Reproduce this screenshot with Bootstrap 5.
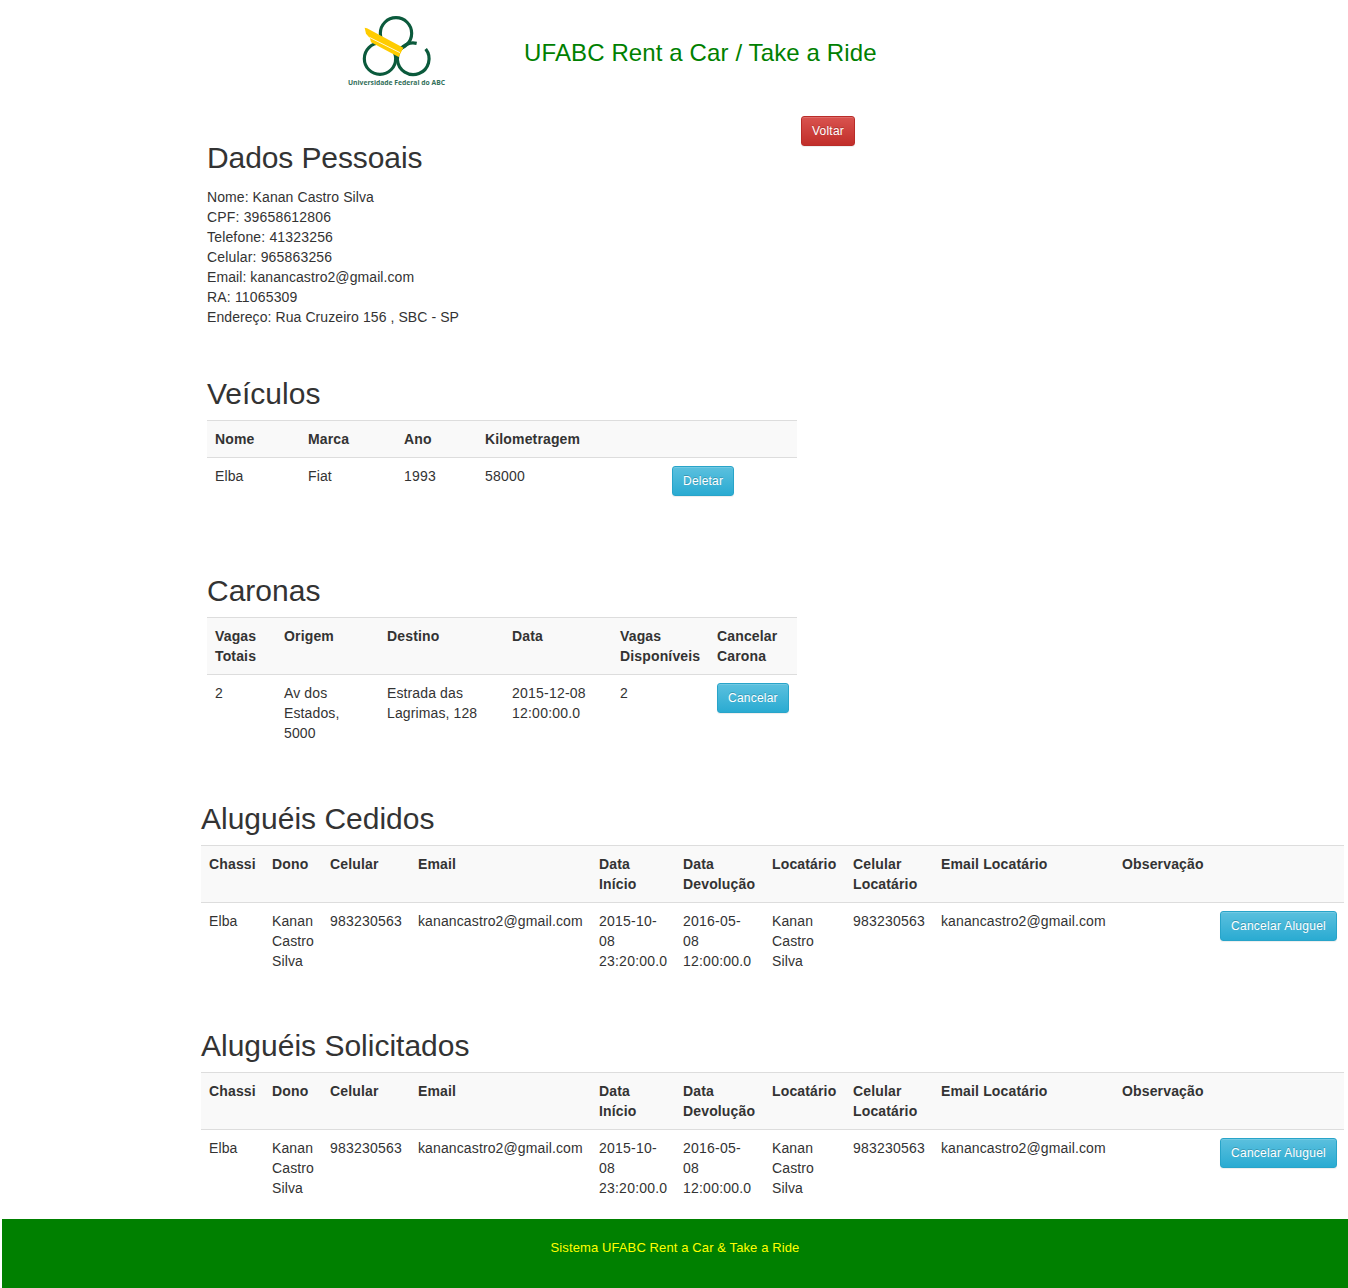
<!DOCTYPE html>
<html lang="pt-BR">
<head>
<meta charset="utf-8">
<meta name="viewport" content="width=device-width, initial-scale=1">
<title>UFABC Rent a Car / Take a Ride</title>
<link href="https://cdn.jsdelivr.net/npm/bootstrap@5.3.0/dist/css/bootstrap.min.css" rel="stylesheet">
<style>
  body { font: 14px/20px "Liberation Sans", Arial, sans-serif; color: #333; background: #fff; letter-spacing: .12px; overflow: hidden; }
  .page-top { height: 116px; padding-left: 340px; }
  .brand-logo { width: 115px; height: 85px; margin-top: 8px; }
  .site-title { font-size: 24px; line-height: 28px; color: green; margin: 39px 0 0 69px; letter-spacing: .12px; }
  .profile { padding-left: 207px; height: 261px; }
  .profile-info { width: 594px; padding-top: 25px; letter-spacing: .08px; }
  h2 { font-size: 30px; line-height: 33px; font-weight: 400; margin: 0 0 10px; letter-spacing: 0; }
  .profile h2 { margin-bottom: 13px; letter-spacing: -.1px; }
  .narrow-block { margin-left: 207px; width: 590px; }
  .wide-block { margin-left: 201px; width: 1143px; height: 227px; }
  .vehicles { height: 197px; }
  .rides { height: 228px; }
  .wide-block.last-block { height: 190px; }
  .grid-table { table-layout: fixed; border-collapse: separate; border-spacing: 0; color: #333; --bs-table-color: #333; --bs-table-bg: transparent; }
  .grid-table > :not(caption) > * > * { padding: 8px; border: 0; border-top: 1px solid #ddd; vertical-align: top; }
  .grid-table > thead > tr > th { background: #f9f9f9; letter-spacing: .15px; }
  .grid-table td.digits { letter-spacing: .22px; }
  .profile-info .digits { letter-spacing: .17px; }
  .btn-glossy { font-size: 12px; line-height: 18px; padding: 5px 10px; border-radius: 3px; color: #fff; letter-spacing: .22px; text-shadow: 0 -1px 0 rgba(0,0,0,.2); box-shadow: inset 0 1px 0 rgba(255,255,255,.15), 0 1px 1px rgba(0,0,0,.075); display: block; white-space: nowrap; }
  .btn-glossy:hover { color: #fff; }
  .wide-block .btn-glossy { letter-spacing: .27px; }
  .btn-sky { background: linear-gradient(#5bc0de, #2aabd2); border-color: #28a4c9; }
  .btn-brick { background: linear-gradient(#d9534f, #c12e2a); border-color: #b92c28; }
  .page-foot { margin-left: 2px; height: 69px; padding-top: 19px; background: green; color: #ff0; font-size: 13px; letter-spacing: .11px; }
</style>
</head>
<body>
<header class="page-top d-flex align-items-start">
  <svg class="brand-logo" viewBox="0 0 345 255" role="img" aria-label="Universidade Federal do ABC">
    <g fill="none" stroke="#0b5a3c" stroke-width="9.5">
      <circle cx="168" cy="76" r="47"/>
      <circle cx="120" cy="152" r="47"/>
      <path d="M230 106A47.5 47.5 0 1 0 257 123" stroke-linejoin="round"/>
    </g>
    <path d="M74 59L81 61L190 119L176 147L93 103L90 91L78 77Z" fill="#fc0"/>
    <path d="M88 88L180 134" stroke="#fff8d8" stroke-width="3"/>
    <text x="24" y="231" textLength="291" lengthAdjust="spacingAndGlyphs" font-family="Open Sans, sans-serif" font-size="20" font-weight="700" fill="#33705a" letter-spacing="0">Universidade Federal do ABC</text>
  </svg>
  <h1 class="site-title fw-normal">UFABC Rent a Car / Take a Ride</h1>
</header>
<main>
  <section class="profile d-flex align-items-start">
    <div class="profile-info">
      <h2>Dados Pessoais</h2>
      <div>Nome: Kanan Castro Silva</div>
      <div class="digits">CPF: 39658612806</div>
      <div class="digits">Telefone: 41323256</div>
      <div class="digits">Celular: 965863256</div>
      <div>Email: kanancastro2@gmail.com</div>
      <div class="digits">RA: 11065309</div>
      <div>Endereço: Rua Cruzeiro 156 , SBC - SP</div>
    </div>
    <button type="button" class="btn btn-glossy btn-brick">Voltar</button>
  </section>

  <section class="narrow-block vehicles">
    <h2>Veículos</h2>
    <table class="table grid-table mb-0">
      <colgroup><col width="93"><col width="96"><col width="81"><col width="187"><col width="133"></colgroup>
      <thead><tr><th>Nome</th><th>Marca</th><th>Ano</th><th>Kilometragem</th><th></th></tr></thead>
      <tbody><tr><td>Elba</td><td>Fiat</td><td class="digits">1993</td><td class="digits">58000</td><td><button type="button" class="btn btn-glossy btn-sky">Deletar</button></td></tr></tbody>
    </table>
  </section>

  <section class="narrow-block rides">
    <h2>Caronas</h2>
    <table class="table grid-table mb-0">
      <colgroup><col width="69"><col width="103"><col width="125"><col width="108"><col width="97"><col width="88"></colgroup>
      <thead><tr><th>Vagas<br>Totais</th><th>Origem</th><th>Destino</th><th>Data</th><th>Vagas<br>Disponíveis</th><th>Cancelar<br>Carona</th></tr></thead>
      <tbody><tr><td>2</td><td>Av dos<br>Estados,<br>5000</td><td>Estrada das<br>Lagrimas, 128</td><td class="digits">2015-12-08<br>12:00:00.0</td><td>2</td><td><button type="button" class="btn btn-glossy btn-sky">Cancelar</button></td></tr></tbody>
    </table>
  </section>

  <section class="wide-block">
    <h2>Aluguéis Cedidos</h2>
    <table class="table grid-table mb-0">
      <colgroup><col width="63"><col width="58"><col width="88"><col width="181"><col width="84"><col width="89"><col width="81"><col width="88"><col width="181"><col width="98"><col width="132"></colgroup>
      <thead><tr><th>Chassi</th><th>Dono</th><th>Celular</th><th>Email</th><th>Data<br>Início</th><th>Data<br>Devolução</th><th>Locatário</th><th>Celular<br>Locatário</th><th>Email Locatário</th><th>Observação</th><th></th></tr></thead>
      <tbody><tr><td>Elba</td><td>Kanan<br>Castro<br>Silva</td><td class="digits">983230563</td><td>kanancastro2@gmail.com</td><td class="digits">2015-10-<br>08<br>23:20:00.0</td><td class="digits">2016-05-<br>08<br>12:00:00.0</td><td>Kanan<br>Castro<br>Silva</td><td class="digits">983230563</td><td>kanancastro2@gmail.com</td><td></td><td><button type="button" class="btn btn-glossy btn-sky">Cancelar Aluguel</button></td></tr></tbody>
    </table>
  </section>

  <section class="wide-block last-block">
    <h2>Aluguéis Solicitados</h2>
    <table class="table grid-table mb-0">
      <colgroup><col width="63"><col width="58"><col width="88"><col width="181"><col width="84"><col width="89"><col width="81"><col width="88"><col width="181"><col width="98"><col width="132"></colgroup>
      <thead><tr><th>Chassi</th><th>Dono</th><th>Celular</th><th>Email</th><th>Data<br>Início</th><th>Data<br>Devolução</th><th>Locatário</th><th>Celular<br>Locatário</th><th>Email Locatário</th><th>Observação</th><th></th></tr></thead>
      <tbody><tr><td>Elba</td><td>Kanan<br>Castro<br>Silva</td><td class="digits">983230563</td><td>kanancastro2@gmail.com</td><td class="digits">2015-10-<br>08<br>23:20:00.0</td><td class="digits">2016-05-<br>08<br>12:00:00.0</td><td>Kanan<br>Castro<br>Silva</td><td class="digits">983230563</td><td>kanancastro2@gmail.com</td><td></td><td><button type="button" class="btn btn-glossy btn-sky">Cancelar Aluguel</button></td></tr></tbody>
    </table>
  </section>
</main>
<footer class="page-foot text-center">Sistema UFABC Rent a Car &amp; Take a Ride</footer>
<script src="https://cdn.jsdelivr.net/npm/bootstrap@5.3.0/dist/js/bootstrap.bundle.min.js"></script>
</body>
</html>
